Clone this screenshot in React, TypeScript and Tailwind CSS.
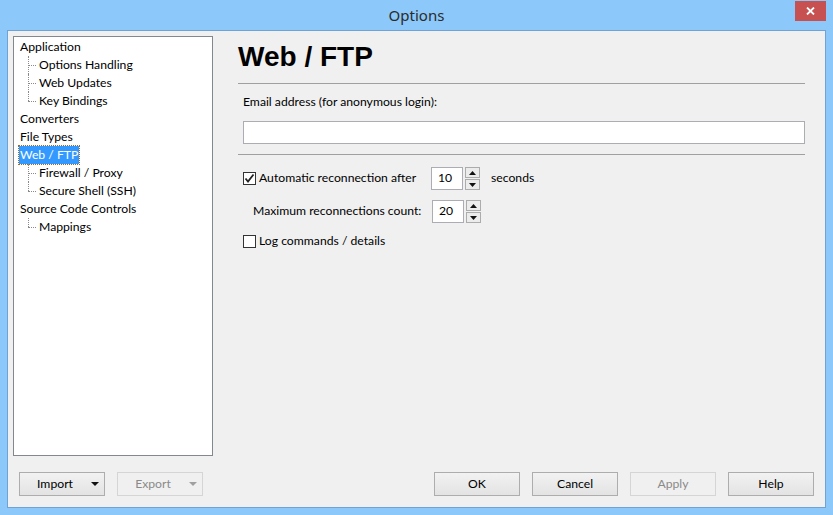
import React from "react";

type Node = { label: string; depth: 0 | 1; last?: boolean; selected?: boolean };

const nodes: Node[] = [
  { label: "Application", depth: 0 },
  { label: "Options Handling", depth: 1 },
  { label: "Web Updates", depth: 1 },
  { label: "Key Bindings", depth: 1, last: true },
  { label: "Converters", depth: 0 },
  { label: "File Types", depth: 0 },
  { label: "Web / FTP", depth: 0, selected: true },
  { label: "Firewall / Proxy", depth: 1 },
  { label: "Secure Shell (SSH)", depth: 1, last: true },
  { label: "Source Code Controls", depth: 0 },
  { label: "Mappings", depth: 1, last: true },
];

function TreeRow({ node }: { node: Node }) {
  if (node.depth === 0) {
    return (
      <div className="h-[18px] flex items-center pl-[5px]">
        <span
          className={
            node.selected
              ? "bg-[#3399ff] text-white px-[1px] h-[18px] leading-[18px] outline-1 outline-dotted outline-[#9a6a2a]"
              : "px-[1px] leading-[18px]"
          }
        >
          {node.label}
        </span>
      </div>
    );
  }
  return (
    <div className="h-[18px] flex items-center">
      <div className="relative w-[25px] h-[18px] shrink-0">
        <div
          className={
            "absolute left-[14px] top-0 border-l border-dotted border-[#8a8a8a] " +
            (node.last ? "h-[9px]" : "h-[18px]")
          }
        />
        <div className="absolute left-[14px] top-[9px] w-[8px] border-t border-dotted border-[#8a8a8a]" />
      </div>
      <span className="leading-[18px]">{node.label}</span>
    </div>
  );
}

function Checkbox({ checked }: { checked?: boolean }) {
  return (
    <div className="w-[13px] h-[13px] border border-[#333333] bg-white flex items-center justify-center shrink-0">
      {checked && (
        <svg width="11" height="11" viewBox="0 0 11 11">
          <path d="M1.5 5.5 L4 8.5 L9.5 1.5" fill="none" stroke="#222" strokeWidth="1.8" />
        </svg>
      )}
    </div>
  );
}

function Spin({ value }: { value: string }) {
  return (
    <div className="flex items-center gap-[2px]">
      <div className="w-[32px] h-[23px] border border-[#abadb3] bg-white flex items-center pl-[6px]">
        {value}
      </div>
      <div className="flex flex-col gap-[1px]">
        <div className="w-[15px] h-[11px] border border-[#acacac] bg-[#ececec] flex items-center justify-center">
          <svg width="7" height="4" viewBox="0 0 7 4">
            <path d="M0 4 L3.5 0 L7 4 Z" fill="#111" />
          </svg>
        </div>
        <div className="w-[15px] h-[11px] border border-[#acacac] bg-[#ececec] flex items-center justify-center">
          <svg width="7" height="4" viewBox="0 0 7 4">
            <path d="M0 0 L7 0 L3.5 4 Z" fill="#111" />
          </svg>
        </div>
      </div>
    </div>
  );
}

function Btn({ label, disabled, drop }: { label: string; disabled?: boolean; drop?: boolean }) {
  return (
    <div
      className={
        "relative w-[86px] h-[24px] border flex items-center justify-center " +
        (disabled
          ? "border-[#d5d5d5] bg-[#f0f0f0] text-[#8a8a8a]"
          : "border-[#adadad] bg-gradient-to-b from-[#f2f2f2] to-[#e3e3e3] text-[#000]")
      }
    >
      <span className={drop ? "-ml-[14px]" : ""}>{label}</span>
      {drop && (
        <svg className="absolute right-[5px] top-[9px]" width="8" height="4" viewBox="0 0 8 4">
          <path d="M0 0 L8 0 L4 4 Z" fill={disabled ? "#a0a0a0" : "#111"} />
        </svg>
      )}
    </div>
  );
}

export default function App() {
  return (
    <div
      className="w-[833px] h-[515px] bg-[#8cc8f9] flex flex-col text-[12.2px] text-[#000] overflow-hidden"
      style={{ fontFamily: 'Lato, "Noto Sans", sans-serif' }}
    >
      {/* Title bar */}
      <div className="relative h-[30px] flex items-center justify-center shrink-0">
        <span className="text-[15px] text-[#2b2b2b]" style={{ fontFamily: '"Noto Sans", sans-serif' }}>
          Options
        </span>
        <div className="absolute right-[7px] top-[1px] w-[31px] h-[20px] bg-[#c75050] flex items-center justify-center">
          <svg width="9" height="8" viewBox="0 0 9 8">
            <path d="M1 0.5 L8 7.5 M8 0.5 L1 7.5" stroke="white" strokeWidth="1.8" />
          </svg>
        </div>
      </div>

      {/* Body */}
      <div className="flex-1 px-[7px] pb-[7px]">
        <div className="h-full border border-[#6fa2d6] bg-[#f0f0f0] flex flex-col">
          <div className="flex flex-1 pt-[5px]">
            {/* Tree */}
            <div className="ml-[5px] w-[200px] h-[420px] border border-[#828790] bg-white pt-[1px]">
              {nodes.map((n) => (
                <TreeRow key={n.label} node={n} />
              ))}
            </div>

            {/* Page */}
            <div className="flex-1 ml-[25px] mr-[20px]">
              <div
                className="text-[28px] font-bold text-black leading-[36px] mt-[3px]"
                style={{ fontFamily: '"Liberation Sans", Arial, sans-serif' }}
              >
                Web / FTP
              </div>
              <div className="mt-[8px] border-t border-[#a0a0a0]" />
              <div className="pl-[5px]">
                <div className="mt-[10px] leading-[16px]">Email address (for anonymous login):</div>
                <div className="mt-[11px] h-[23px] border border-[#abadb3] bg-white" />
              </div>
              <div className="mt-[10px] border-t border-[#a0a0a0]" />
              <div className="pl-[5px]">
                <div className="mt-[12px] flex items-center h-[23px]">
                  <Checkbox checked />
                  <span className="ml-[3px] w-[172px]">Automatic reconnection after</span>
                  <Spin value="10" />
                  <span className="ml-[11px] -mt-[1px]">seconds</span>
                </div>
                <div className="mt-[10px] flex items-center h-[23px]">
                  <span className="ml-[10px] w-[179px]">Maximum reconnections count:</span>
                  <Spin value="20" />
                </div>
                <div className="mt-[9px] flex items-center h-[18px]">
                  <Checkbox />
                  <span className="ml-[3px]">Log commands / details</span>
                </div>
              </div>
            </div>
          </div>

          {/* Buttons */}
          <div className="flex items-center h-[24px] mb-[11px] mt-[15px]">
            <div className="ml-[11px] flex gap-[12px]">
              <Btn label="Import" drop />
              <Btn label="Export" drop disabled />
            </div>
            <div className="ml-auto mr-[11px] flex gap-[12px]">
              <Btn label="OK" />
              <Btn label="Cancel" />
              <Btn label="Apply" disabled />
              <Btn label="Help" />
            </div>
          </div>
        </div>
      </div>
    </div>
  );
}
